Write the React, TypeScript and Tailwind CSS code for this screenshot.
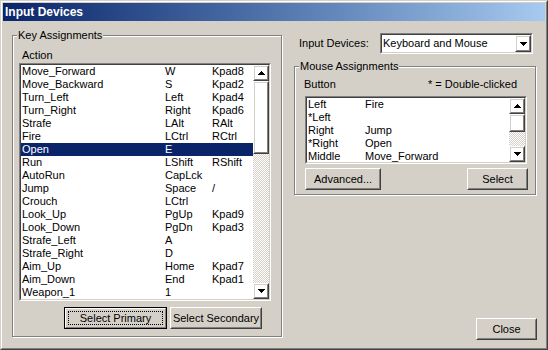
import type { ReactNode } from 'react'
import clsx from 'clsx'

const keyRows = [
  ['Move_Forward', 'W', 'Kpad8'],
  ['Move_Backward', 'S', 'Kpad2'],
  ['Turn_Left', 'Left', 'Kpad4'],
  ['Turn_Right', 'Right', 'Kpad6'],
  ['Strafe', 'LAlt', 'RAlt'],
  ['Fire', 'LCtrl', 'RCtrl'],
  ['Open', 'E', ''],
  ['Run', 'LShift', 'RShift'],
  ['AutoRun', 'CapLck', ''],
  ['Jump', 'Space', '/'],
  ['Crouch', 'LCtrl', ''],
  ['Look_Up', 'PgUp', 'Kpad9'],
  ['Look_Down', 'PgDn', 'Kpad3'],
  ['Strafe_Left', 'A', ''],
  ['Strafe_Right', 'D', ''],
  ['Aim_Up', 'Home', 'Kpad7'],
  ['Aim_Down', 'End', 'Kpad1'],
  ['Weapon_1', '1', ''],
]

const mouseRows = [
  ['Left', 'Fire'],
  ['*Left', ''],
  ['Right', 'Jump'],
  ['*Right', 'Open'],
  ['Middle', 'Move_Forward'],
]

function Arrow({ down }: { down?: boolean }) {
  return (
    <svg width="7" height="4" viewBox="0 0 7 4" className={clsx(down && 'rotate-180')}>
      <path d="M3 0h1v1h1v1h1v1h1v1H0V3h1V2h1V1h1z" fill="#000" />
    </svg>
  )
}

// raised 3d edge used by buttons, scroll arrows and thumbs
function Raised({ className, children }: { className?: string; children?: ReactNode }) {
  return (
    <div className={clsx('border border-t-white border-l-white border-r-[#404040] border-b-[#404040]', className)}>
      <div className="h-full border border-t-[#d4d0c8] border-l-[#d4d0c8] border-r-[#808080] border-b-[#808080] flex items-center justify-center">
        {children}
      </div>
    </div>
  )
}

function Sunken({ className, children }: { className?: string; children?: ReactNode }) {
  return (
    <div className={clsx('border border-t-[#808080] border-l-[#808080] border-r-white border-b-white', className)}>
      <div className="h-full border border-t-[#404040] border-l-[#404040] border-r-[#d4d0c8] border-b-[#d4d0c8] bg-white flex overflow-hidden">
        {children}
      </div>
    </div>
  )
}

function Button({ label, className, focused }: { label: string; className: string; focused?: boolean }) {
  if (focused) {
    return (
      <div className={clsx('h-[22px] border border-black', className)}>
        <div className="h-full border border-t-white border-l-white border-r-[#808080] border-b-[#808080] p-[2px]">
          <div className="h-full border border-dotted border-black flex items-center justify-center">{label}</div>
        </div>
      </div>
    )
  }
  return <Raised className={clsx('h-[22px]', className)}>{label}</Raised>
}

function Scrollbar({ thumb, track }: { thumb: string; track: string }) {
  return (
    <div className="w-[16px] flex flex-col shrink-0">
      <Raised className="h-[16px]">
        <Arrow />
      </Raised>
      <Raised className={thumb} />
      <div className={clsx(track, 'bg-[image:repeating-conic-gradient(#ffffff_0_25%,#d4d0c8_0_50%)] bg-[length:2px_2px]')} />
      <Raised className="h-[16px]">
        <Arrow down />
      </Raised>
    </div>
  )
}

function GroupBox({ title, className, children }: { title: string; className: string; children: ReactNode }) {
  return (
    <div className={clsx('relative border border-[#808080] shadow-[inset_1px_1px_0_#ffffff,1px_1px_0_#ffffff]', className)}>
      <span className="absolute -top-[7px] left-[4px] px-[1px] bg-[#d4d0c8] leading-[13px]">{title}</span>
      {children}
    </div>
  )
}

export default function App() {
  return (
    <div className="w-[548px] h-[350px] bg-[#d4d0c8] text-[11px] text-black font-['Liberation_Sans',Arial,sans-serif] border border-t-[#d4d0c8] border-l-[#d4d0c8] border-r-[#404040] border-b-[#404040]">
      <div className="h-full border border-t-white border-l-white border-r-[#808080] border-b-[#808080] p-[1px] flex flex-col">
        <div className="h-[18px] shrink-0 bg-linear-to-r from-[#0a246a] to-[#a6caf0] text-white font-bold text-[12px] leading-[18px] pl-[2px]">
          Input Devices
        </div>

        <div className="flex-1 flex min-h-0">
          <GroupBox title="Key Assignments" className="ml-[9px] mt-[14px] w-[270px] h-[302px] pt-[13px]">
            <div className="ml-[9px] h-[13px] leading-[13px]">Action</div>
            <Sunken className="ml-[6px] mt-[1px] w-[252px] h-[238px]">
              <div className="flex-1 flex flex-col">
                {keyRows.map(([action, primary, secondary]) => (
                  <div
                    key={action}
                    className={clsx(
                      'h-[13px] leading-[13px] flex pl-[1px] shrink-0 whitespace-nowrap',
                      action === 'Open' && 'bg-[#0a246a] text-white'
                    )}
                  >
                    <span className="w-[143px]">{action}</span>
                    <span className="w-[47px]">{primary}</span>
                    <span>{secondary}</span>
                  </div>
                ))}
              </div>
              <Scrollbar thumb="h-[73px]" track="flex-1" />
            </Sunken>
            <div className="flex gap-[3px] mt-[6px] ml-[51px]">
              <Button label="Select Primary" className="w-[103px]" focused />
              <Button label="Select Secondary" className="w-[92px]" />
            </div>
          </GroupBox>

          <div className="ml-[12px] w-[243px] flex flex-col">
            <div className="mt-[12px] flex items-center pl-[5px]">
              <span className="w-[81px]">Input Devices:</span>
              <Sunken className="w-[153px] h-[21px]">
                <span className="flex-1 pl-[1px] leading-[17px]">Keyboard and Mouse</span>
                <Raised className="w-[16px] h-[17px]">
                  <Arrow down />
                </Raised>
              </Sunken>
            </div>

            <GroupBox title="Mouse Assignments" className="mt-[12px] w-[242px] h-[129px] pt-[11px]">
              <div className="ml-[9px] w-[213px] h-[13px] leading-[13px] flex justify-between">
                <span>Button</span>
                <span>* = Double-clicked</span>
              </div>
              <Sunken className="ml-[10px] mt-[5px] w-[222px] h-[68px]">
                <div className="flex-1 flex flex-col">
                  {mouseRows.map(([button, action]) => (
                    <div key={button} className="h-[13px] leading-[13px] flex pl-[1px] shrink-0 whitespace-nowrap">
                      <span className="w-[57px]">{button}</span>
                      <span>{action}</span>
                    </div>
                  ))}
                </div>
                <Scrollbar thumb="h-[18px]" track="flex-1" />
              </Sunken>
              <div className="ml-[10px] w-[223px] mt-[4px] flex justify-between">
                <Button label="Advanced..." className="w-[76px] h-[21px]" />
                <Button label="Select" className="w-[61px] h-[21px]" />
              </div>
            </GroupBox>

            <div className="mt-auto mb-[7px] self-end">
              <Button label="Close" className="w-[61px]" />
            </div>
          </div>
        </div>
      </div>
    </div>
  )
}
